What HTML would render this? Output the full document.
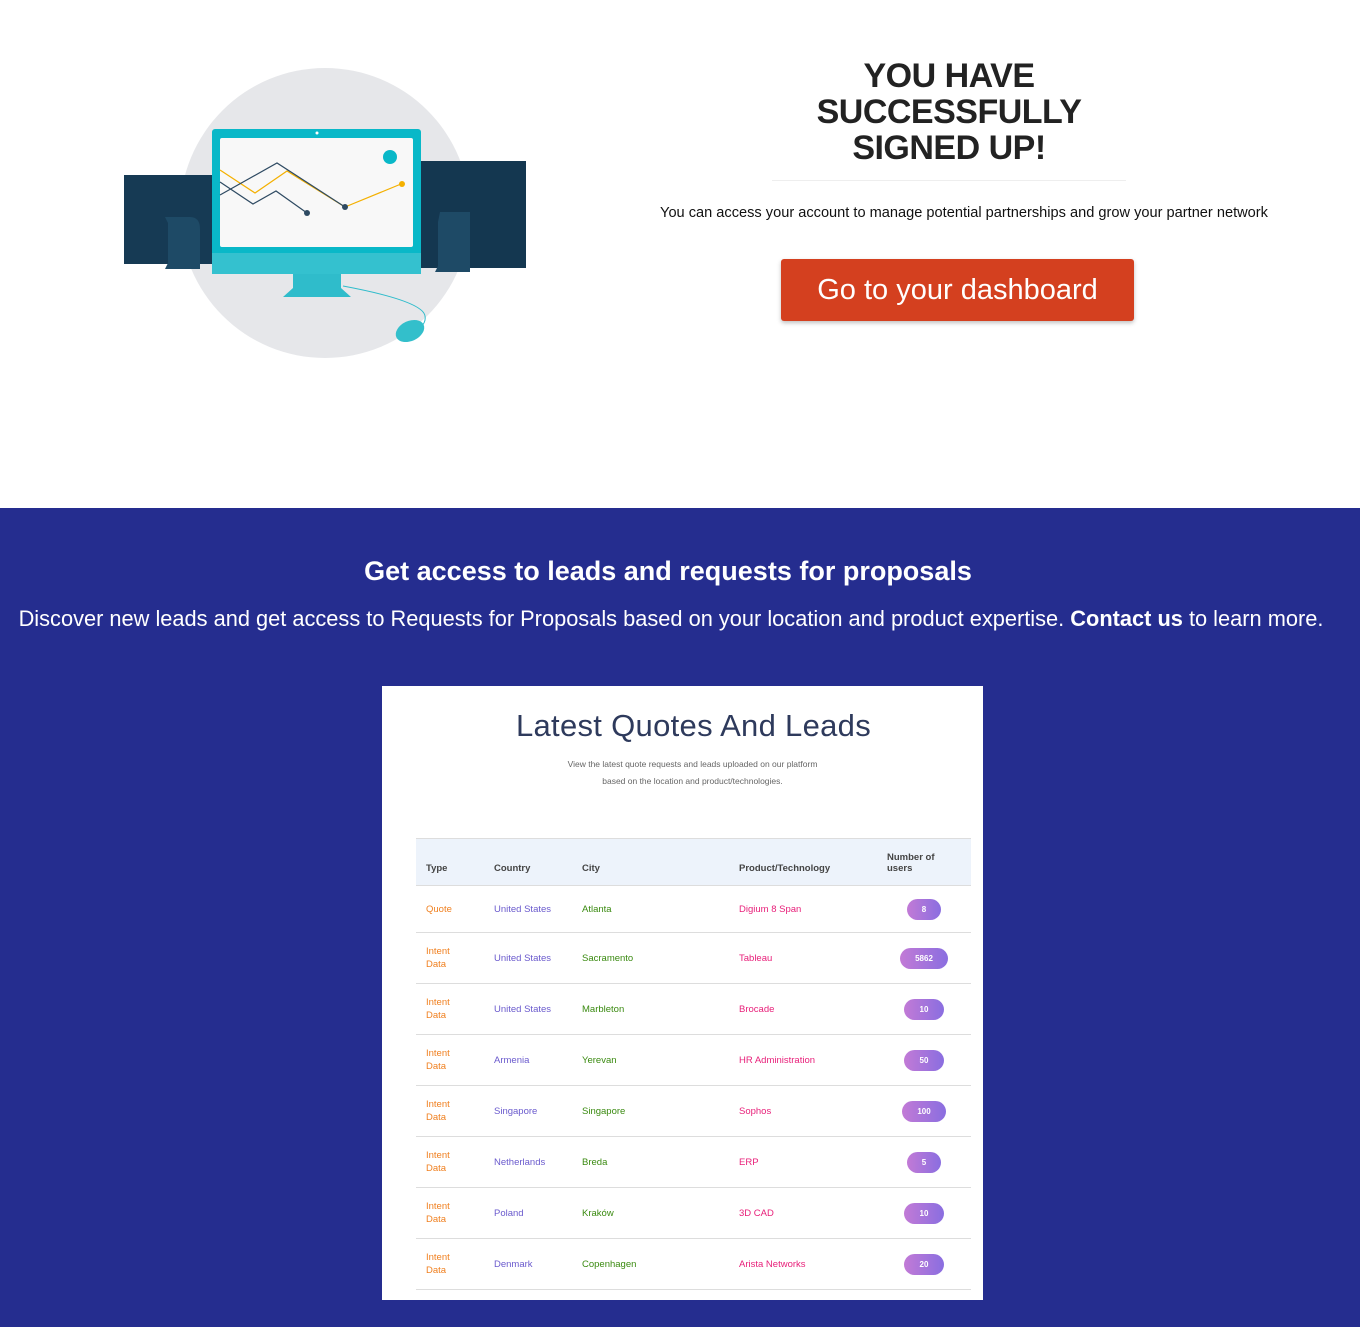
<!DOCTYPE html>
<html><head><meta charset="utf-8"><style>
*{margin:0;padding:0;box-sizing:border-box}
body{width:1360px;height:1327px;overflow:hidden;background:#fff;font-family:"Liberation Sans",sans-serif}
.top{position:relative;height:508px;background:#fff}
.blue{position:absolute;top:508px;left:0;width:1360px;height:819px;background:#252d8f;color:#fff}
h1{position:absolute;left:770px;width:358px;top:58px;text-align:center;font-size:34px;line-height:36px;font-weight:bold;color:#222;letter-spacing:-0.5px}
.hr{position:absolute;left:772px;width:354px;top:180px;height:1px;background:#eee}
.sub{position:absolute;left:620px;width:688px;top:205px;text-align:center;font-size:14.6px;color:#111}
.btn{position:absolute;left:781px;top:259px;width:353px;height:62px;background:#d4401f;border-radius:3px;color:#fff;font-size:29px;text-align:center;line-height:62px;box-shadow:0 2px 4px rgba(0,0,0,.25)}
.b1{position:absolute;top:48px;left:-12px;width:100%;text-align:center;font-size:27px;font-weight:bold}
.b2{position:absolute;top:98px;left:-19px;width:1380px;text-align:center;font-size:21.8px;white-space:nowrap}
.card{position:absolute;left:382px;top:178px;width:601px;height:614px;background:#fff;color:#333}
.card h2{position:absolute;top:22px;left:11px;width:100%;text-align:center;font-weight:normal;font-size:31px;color:#2e3a5c;letter-spacing:.3px}
.card p{position:absolute;top:70px;left:10px;width:100%;text-align:center;font-size:8.5px;line-height:17px;color:#666}
table{position:absolute;left:34px;top:152px;width:555px;border-collapse:collapse;font-size:9.5px}
th{background:#edf3fb;height:47px;text-align:left;font-weight:bold;color:#444;vertical-align:bottom;padding:0 0 11px 10px;border-top:1px solid #ddd;border-bottom:1px solid #ddd}
td{height:51px;border-bottom:1px solid #ddd;padding-left:10px;line-height:13px}
tr.f td{height:47px}
.t{color:#f08020}.c{color:#6a5acd}.y{color:#3a8a10}.p{color:#e8207a}
.bd{display:inline-block;height:21px;line-height:21px;border-radius:11px;background:linear-gradient(90deg,#c27ad6,#8a6ee0);color:#fff;font-size:8px;font-weight:bold;text-align:center}
td.n{text-align:center;padding-left:0}
</style></head><body>
<div class="top">
<svg style="position:absolute;left:110px;top:60px" width="430" height="310" viewBox="0 0 430 310">
<circle cx="215" cy="153" r="145" fill="#e6e7ea"/>
<rect x="14" y="115" width="90" height="89" fill="#163a54"/>
<path d="M55,157 h25 q10,0 10,12 v40 h-35 l3,-6 v-40z" fill="#1e4a66"/>
<rect x="311" y="101" width="105" height="107" fill="#143750"/>
<path d="M330,152 h30 v60 h-35 l3,-6 v-44z" fill="#1e4a66"/>
<rect x="102" y="69" width="209" height="145" rx="3" fill="#09b8c8"/>
<rect x="110" y="78" width="193" height="109" rx="2" fill="#f8f8f8"/>
<rect x="102" y="193" width="209" height="21" fill="#34c1cf"/>
<circle cx="207" cy="73" r="1.5" fill="#fff"/>
<path d="M183,214 h48 v14 l10,9 h-68 l10,-9z" fill="#2fbccb"/>
<path d="M110,110 l35,23 l32,-22 l58,36" stroke="#f4b000" stroke-width="1.2" fill="none"/>
<path d="M235,147 l56,-23" stroke="#f4b000" stroke-width="1.2" fill="none"/>
<path d="M110,122 l33,22 l23,-13 l31,22" stroke="#2e4a62" stroke-width="1.2" fill="none"/>
<path d="M110,135 l57,-32 l68,44" stroke="#2e4a62" stroke-width="1.2" fill="none"/>
<circle cx="197" cy="153" r="3" fill="#2e4a62"/><circle cx="235" cy="147" r="3" fill="#2e4a62"/><circle cx="292" cy="124" r="3" fill="#f4b000"/>
<circle cx="280" cy="97" r="7" fill="#09b8c8"/>
<path d="M233,226 q80,15 82,30 q2,10 -15,18" stroke="#2fbccb" stroke-width="1" fill="none"/>
<ellipse cx="300" cy="271" rx="15" ry="10" transform="rotate(-25 300 271)" fill="#33bfcb"/>
</svg>
<h1>YOU HAVE SUCCESSFULLY SIGNED UP!</h1>
<div class="hr"></div>
<div class="sub">You can access your account to manage potential partnerships and grow your partner network</div>
<div class="btn">Go to your dashboard</div>
</div>
<div class="blue">
<div class="b1">Get access to leads and requests for proposals</div>
<div class="b2">Discover new leads and get access to Requests for Proposals based on your location and product expertise. <b>Contact us</b> to learn more.</div>
<div class="card">
<h2>Latest Quotes And Leads</h2>
<p>View the latest quote requests and leads uploaded on our platform<br>based on the location and product/technologies.</p>
<table>
<tr><th style="width:68px">Type</th><th style="width:88px">Country</th><th style="width:157px">City</th><th style="width:148px">Product/Technology</th><th>Number of<br>users</th></tr>
<tr class="f"><td class="t">Quote</td><td class="c">United States</td><td class="y">Atlanta</td><td class="p">Digium 8 Span</td><td class="n"><span class="bd" style="width:34px">8</span></td></tr>
<tr><td class="t">Intent<br>Data</td><td class="c">United States</td><td class="y">Sacramento</td><td class="p">Tableau</td><td class="n"><span class="bd" style="width:48px">5862</span></td></tr>
<tr><td class="t">Intent<br>Data</td><td class="c">United States</td><td class="y">Marbleton</td><td class="p">Brocade</td><td class="n"><span class="bd" style="width:40px">10</span></td></tr>
<tr><td class="t">Intent<br>Data</td><td class="c">Armenia</td><td class="y">Yerevan</td><td class="p">HR Administration</td><td class="n"><span class="bd" style="width:40px">50</span></td></tr>
<tr><td class="t">Intent<br>Data</td><td class="c">Singapore</td><td class="y">Singapore</td><td class="p">Sophos</td><td class="n"><span class="bd" style="width:44px">100</span></td></tr>
<tr><td class="t">Intent<br>Data</td><td class="c">Netherlands</td><td class="y">Breda</td><td class="p">ERP</td><td class="n"><span class="bd" style="width:34px">5</span></td></tr>
<tr><td class="t">Intent<br>Data</td><td class="c">Poland</td><td class="y">Kraków</td><td class="p">3D CAD</td><td class="n"><span class="bd" style="width:40px">10</span></td></tr>
<tr><td class="t">Intent<br>Data</td><td class="c">Denmark</td><td class="y">Copenhagen</td><td class="p">Arista Networks</td><td class="n"><span class="bd" style="width:40px">20</span></td></tr>
</table>
</div>
</div>
</body></html>
